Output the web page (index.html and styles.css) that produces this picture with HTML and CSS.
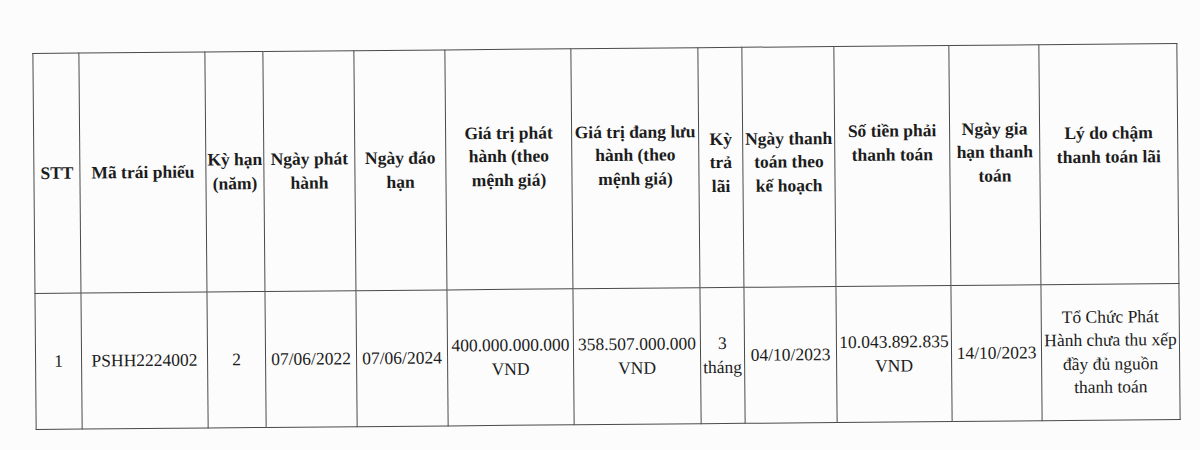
FILE: index.html
```html
<!DOCTYPE html>
<html lang="vi">
<head>
<meta charset="utf-8">
<title>Bảng trái phiếu</title>
<link rel="stylesheet" href="styles.css">
</head>
<body>
<div class="page">
<table class="bonds">
  <colgroup>
    <col class="c1"><col class="c2"><col class="c3"><col class="c4"><col class="c5"><col class="c6">
    <col class="c7"><col class="c8"><col class="c9"><col class="c10"><col class="c11"><col class="c12">
  </colgroup>
  <thead>
    <tr class="head-row">
      <th>STT</th>
      <th>Mã trái phiếu</th>
      <th>Kỳ hạn<br>(năm)</th>
      <th>Ngày phát<br>hành</th>
      <th>Ngày đáo<br>hạn</th>
      <th class="up-md">Giá trị phát<br>hành (theo<br>mệnh giá)</th>
      <th class="up-md">Giá trị đang lưu<br>hành (theo<br>mệnh giá)</th>
      <th class="up-sm">Kỳ<br>trả<br>lãi</th>
      <th class="up-sm">Ngày thanh<br>toán theo<br>kế hoạch</th>
      <th class="up-xl">Số tiền phải<br>thanh toán</th>
      <th class="up-md">Ngày gia<br>hạn thanh<br>toán</th>
      <th class="up-lg">Lý do chậm<br>thanh toán lãi</th>
    </tr>
  </thead>
  <tbody>
    <tr class="body-row">
      <td>1</td>
      <td>PSHH2224002</td>
      <td>2</td>
      <td>07/06/2022</td>
      <td>07/06/2024</td>
      <td>400.000.000.000<br>VND</td>
      <td>358.507.000.000<br>VND</td>
      <td>3<br>tháng</td>
      <td>04/10/2023</td>
      <td>10.043.892.835<br>VND</td>
      <td>14/10/2023</td>
      <td>Tổ Chức Phát<br>Hành chưa thu xếp<br>đầy đủ nguồn<br>thanh toán</td>
    </tr>
  </tbody>
</table>
</div>
</body>
</html>
```

FILE: styles.css
```css
html, body {
  margin: 0;
  padding: 0;
  background: #fcfcfc;
}

.page {
  width: 1200px;
  height: 450px;
  padding-top: 48px;
  padding-left: 34px;
  box-sizing: border-box;
  overflow: hidden;
}

.bonds {
  width: 1144px;
  table-layout: fixed;
  border-collapse: collapse;
  font-family: "Liberation Serif", "Times New Roman", serif;
  font-size: 17.5px;
  line-height: 23.5px;
  color: #1c1c1c;
  transform: rotate(-0.5deg);
  transform-origin: 50% 50%;
}

.bonds th,
.bonds td {
  border: 1.3px solid #4a4a4a;
  padding: 0;
  text-align: center;
  vertical-align: middle;
  white-space: nowrap;
}

.bonds th {
  font-weight: bold;
}

.head-row { height: 240px; }
.body-row { height: 136px; }

.up-sm { padding-bottom: 9px !important; }
.up-md { padding-bottom: 25px !important; }
.up-lg { padding-bottom: 38px !important; }
.up-xl { padding-bottom: 46px !important; }

.c1 { width: 46px; }
.c2 { width: 126px; }
.c3 { width: 58px; }
.c4 { width: 91px; }
.c5 { width: 91px; }
.c6 { width: 126px; }
.c7 { width: 127px; }
.c8 { width: 44px; }
.c9 { width: 92px; }
.c10 { width: 115px; }
.c11 { width: 90px; }
.c12 { width: 138px; }
```
